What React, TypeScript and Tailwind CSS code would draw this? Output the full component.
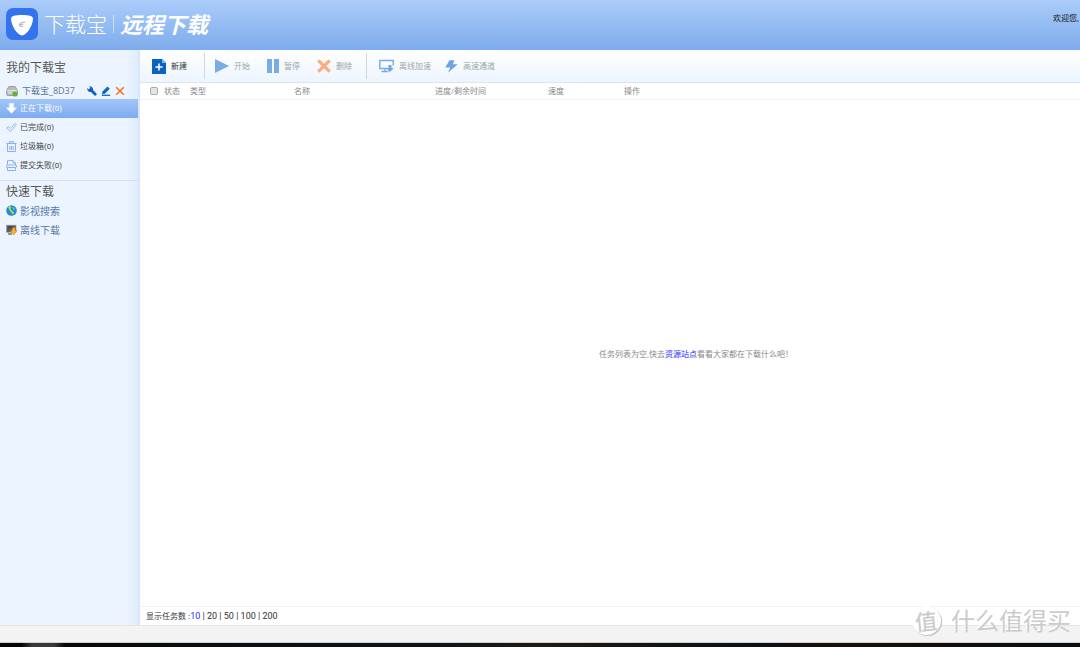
import type { ReactNode } from "react";

const fontStack = "font-['Open_Sans','Noto_Sans_CJK_SC',sans-serif]";

function LogoIcon() {
  return (
    <svg className="size-8 shrink-0" viewBox="0 0 32 32" aria-hidden="true">
      <rect width="32" height="32" rx="7" fill="#3373ed" />
      <path d="M5 10.500C5 8 9 7 16 7s11 1 11 3.500c0 7-6.500 17-11 17S5 17.500 5 10.500Z" fill="#fff" />
      <path d="M19.500 14c-4 0-6 1.300-6 3 0 1.300 2 1.700 3.500 1.200M13.500 16.800l4-.8" fill="none" stroke="#b4b6b8" strokeWidth="1.200" />
    </svg>
  );
}

function DriveIcon() {
  return (
    <svg className="size-3 shrink-0" viewBox="0 0 12 12" aria-hidden="true">
      <path d="M2.800 1.500h6.400L11.300 5.500v4a1 1 0 0 1-1 1H1.700a1 1 0 0 1-1-1v-4Z" fill="#b9bdbd" stroke="#8a9092" strokeWidth=".8" />
      <path d="M1.200 5.800h9.600M2 8h4" stroke="#f4f6f6" strokeWidth=".9" />
      <circle cx="9" cy="9" r="2.600" fill="#65b32c" />
    </svg>
  );
}

function WrenchIcon() {
  return (
    <svg className="size-[10px]" viewBox="0 0 10 10" aria-hidden="true">
      <path d="M3.500 3.500 8.200 8.200" stroke="#0a5fc4" strokeWidth="2.800" strokeLinecap="round" />
      <path d="M.3 2C-.2 4.600 2 6.500 4.200 6L6 4.200C6.500 2 4.600-.2 2 .3L3.600 1.900 3.300 3.300 1.900 3.600Z" fill="#0a5fc4" />
    </svg>
  );
}

function PencilIcon() {
  return (
    <svg className="size-[10px]" viewBox="0 0 10 10" aria-hidden="true">
      <path d="m1.500 5.500 5-5 2.300 2.300-5 5-2.800.5Z" fill="#0a66cc" />
      <path d="M.8 9.300h8.400" stroke="#0a66cc" strokeWidth="1.300" />
    </svg>
  );
}

function CloseIcon() {
  return (
    <svg className="size-[10px]" viewBox="0 0 10 10" aria-hidden="true">
      <path d="m1.200 1.200 7.600 7.600M8.800 1.200 1.200 8.800" stroke="#f5742a" strokeWidth="1.600" />
    </svg>
  );
}

function ArrowDownIcon() {
  return (
    <svg className="size-[11px] shrink-0" viewBox="0 0 11 11" aria-hidden="true">
      <path d="M3.200.3h4.600v4.500h2.900L5.500 10.500.3 4.800h2.900Z" fill="#fff" stroke="#dceafd" strokeWidth=".4" />
    </svg>
  );
}

function CheckIcon() {
  return (
    <svg className="size-[11px] shrink-0" viewBox="0 0 11 11" aria-hidden="true">
      <path d="m.7 6.200 1.500-1.500L4.500 6.500 9.200 1.300l1.200 1.100-5.700 7Z" fill="#f2f7ff" stroke="#86b1ee" strokeWidth=".9" strokeLinejoin="round" />
    </svg>
  );
}

function TrashIcon() {
  return (
    <svg className="size-[11px] shrink-0" viewBox="0 0 11 11" fill="none" stroke="#86b1ee" aria-hidden="true">
      <path d="M.5 2.500h10M3.500 2.300V.7h4v1.600M1.500 2.500v8h8v-8M3.800 5v4M5.500 5v4M7.200 5v4" />
    </svg>
  );
}

function FileIcon() {
  return (
    <svg className="size-[11px] shrink-0" viewBox="0 0 11 11" fill="none" stroke="#86b1ee" aria-hidden="true">
      <path d="M1.500 5V.6h5.700L9.500 3v2M7 .8V3h2.300M1.500 7.500v3h8v-3" />
      <rect x=".6" y="5" width="9.800" height="2.500" rx=".5" />
    </svg>
  );
}

function GlobeIcon() {
  return (
    <svg className="size-[11px] shrink-0" viewBox="0 0 11 11" aria-hidden="true">
      <circle cx="5.500" cy="5.500" r="5.300" fill="#238bd0" />
      <path d="M2 2.500C3.500.8 5 1 5.500 2L4.500 3.500 6 5.500 8 7.500 7.500 9.500C5.500 9 5.500 7 4 6Z" fill="#a7dd5b" />
      <path d="M6.500 1.500 9.500 4l-2 1.200Z" fill="#63c9e5" />
    </svg>
  );
}

function OfflineIcon() {
  return (
    <svg className="size-[11px] shrink-0" viewBox="0 0 11 11" aria-hidden="true">
      <rect x=".5" y="1.200" width="9.500" height="7" fill="#555b62" stroke="#989ea4" strokeWidth=".7" />
      <path d="M2 3h5M2 10h4" stroke="#33373b" strokeWidth="1.200" />
      <path d="M6.300 3.800h2.900v2.700h1.700L7.700 10.800 4.400 6.500h1.900Z" fill="#ffb52d" stroke="#d66c14" strokeWidth=".6" />
    </svg>
  );
}

function NewIcon() {
  return (
    <svg className="h-[15px] w-[14px]" viewBox="0 0 14 15" aria-hidden="true">
      <path d="M0 0h10l4 4v11H0Z" fill="#0c63bf" />
      <path d="M10 0v4h4Z" fill="#79b4ef" />
      <path d="M7 4.500v7M3.500 8h7" stroke="#fff" strokeWidth="1.500" />
    </svg>
  );
}

function PlayIcon() {
  return (
    <svg className="size-[14px]" viewBox="0 0 14 14" aria-hidden="true">
      <path d="M0 0v14l14-7Z" fill="#77ace6" />
    </svg>
  );
}

function PauseIcon() {
  return (
    <svg className="h-[14px] w-3" viewBox="0 0 12 14" aria-hidden="true">
      <path d="M0 0h5v14H0ZM7 0h5v14H7Z" fill="#77ace6" />
    </svg>
  );
}

function DeleteIcon() {
  return (
    <svg className="size-[14px]" viewBox="0 0 14 14" aria-hidden="true">
      <path d="m1.300 1.300 11.400 11.400M12.700 1.300 1.300 12.700" stroke="#fbae7b" strokeWidth="3.300" />
    </svg>
  );
}

function MonitorIcon() {
  return (
    <svg className="h-[14px] w-[15px]" viewBox="0 0 15 14" aria-hidden="true">
      <path d="M8 9.500H.8V1.500h13.400v5M2.500 12.500h7M6 9.500v3" fill="none" stroke="#77ace6" strokeWidth="1.400" />
      <path d="M9.500 6h3v3h2.300L11 13 7.200 9h2.300Z" fill="#6da4e2" />
    </svg>
  );
}

function BoltIcon() {
  return (
    <svg className="size-[13px]" viewBox="0 0 13 13" aria-hidden="true">
      <path d="M4.500.2h5L7.800 4.300h4.900L3 12.800l2.300-5.300H.3Z" fill="#6da4e2" />
    </svg>
  );
}

function ToolButton({ icon, label, active = false }: { icon: ReactNode; label: string; active?: boolean }) {
  return (
    <button type="button" disabled={!active} className={`flex items-center gap-[5px] ${active ? "text-[#333]" : "text-[#a0a4a9]"}`}>
      {icon}
      {label}
    </button>
  );
}

const statusLinks = [
  { label: "正在下载(0)", icon: <ArrowDownIcon />, selected: true },
  { label: "已完成(0)", icon: <CheckIcon />, selected: false },
  { label: "垃圾箱(0)", icon: <TrashIcon />, selected: false },
  { label: "提交失败(0)", icon: <FileIcon />, selected: false },
];

const pageSizes = [10, 20, 50, 100, 200];

function Sidebar() {
  return (
    <aside className="w-[140px] shrink-0 border-r-2 border-[#d6e6fd] bg-[linear-gradient(to_right,#ecf5ff_90%,#e1edfc)] text-[#444]">
      <h2 className="pt-[9px] pl-[6px] text-xs leading-[18px] text-[#555]">我的下载宝</h2>
      <div className="mt-[6px] flex h-4 items-center pl-[6px]">
        <DriveIcon />
        <a href="#device" className="ml-1 text-[9px] text-[#5b7399]">下载宝_8D37</a>
        <div className="ml-3 flex gap-1">
          <button type="button" aria-label="设置"><WrenchIcon /></button>
          <button type="button" aria-label="重命名"><PencilIcon /></button>
          <button type="button" aria-label="移除"><CloseIcon /></button>
        </div>
      </div>
      <nav className="border-b border-[#cfe1fc] pb-[5px]">
        {statusLinks.map((item) => (
          <a
            key={item.label}
            href="#tasks"
            className={`flex h-[19px] items-center gap-[3px] pl-[6px] font-['Roboto','Noto_Sans_CJK_SC',sans-serif] ${item.selected ? "bg-linear-to-b from-[#a3c6f8] to-[#7dabf0] text-white" : ""}`}
          >
            {item.icon}
            {item.label}
          </a>
        ))}
      </nav>
      <h2 className="mt-[2px] pl-[6px] text-xs leading-[18px] text-[#555]">快速下载</h2>
      <nav className="text-[10px] text-[#5877a8]">
        <a href="#search" className="flex h-[19px] items-center gap-[3px] pl-[6px]"><GlobeIcon />影视搜索</a>
        <a href="#offline" className="flex h-[19px] items-center gap-[3px] pl-[6px]"><OfflineIcon />离线下载</a>
      </nav>
    </aside>
  );
}

function TaskPanel() {
  return (
    <main className="flex min-w-0 grow flex-col bg-white">
      <div className="flex h-[33px] shrink-0 items-center border-b border-[#d5e6fa] bg-linear-to-b from-white to-[#edf5ff] pl-3">
        <ToolButton icon={<NewIcon />} label="新建" active />
        <span className="ml-[17px] h-[26px] w-px bg-[#d4d7da]" />
        <div className="ml-[10px] flex gap-[17px]">
          <ToolButton icon={<PlayIcon />} label="开始" />
          <ToolButton icon={<PauseIcon />} label="暂停" />
          <ToolButton icon={<DeleteIcon />} label="删除" />
        </div>
        <span className="ml-[14px] h-[26px] w-px bg-[#d4d7da]" />
        <div className="ml-3 flex gap-[14px]">
          <ToolButton icon={<MonitorIcon />} label="离线加速" />
          <ToolButton icon={<BoltIcon />} label="高速通道" />
        </div>
      </div>
      <table className="w-full table-fixed text-left text-[#888]">
        <thead>
          <tr className="h-4 border-b border-[#eef4fb]">
            <th className="w-6 pl-[10px]">
              <input type="checkbox" aria-label="全选" className="block size-2 appearance-none rounded-xs border border-[#a9a9a9] bg-[#e4e4e4]" />
            </th>
            <th className="w-[26px] font-normal">状态</th>
            <th className="w-[104px] font-normal">类型</th>
            <th className="w-[141px] font-normal">名称</th>
            <th className="w-[113px] font-normal">进度/剩余时间</th>
            <th className="w-[76px] font-normal">速度</th>
            <th className="font-normal">操作</th>
          </tr>
        </thead>
      </table>
      <div className="flex grow items-center justify-center pt-[3px] pl-[172px] text-[#888]">
        <p>
          任务列表为空,快去<a href="#sites" className="text-[#2a2aff]">资源站点</a>看看大家都在下载什么吧！
        </p>
      </div>
      <div className="flex h-[19px] shrink-0 items-center border-t border-[#eef2fa] pl-[6px] whitespace-pre text-[#333]">
        <span>显示任务数 :</span>
        <span className="font-['Roboto',sans-serif] text-[9px]">
          {pageSizes.map((size, i) => (
            <span key={size}>
              {i > 0 && " | "}
              <a href="#size" className={i === 0 ? "text-[#2a2aff]" : ""}>{size}</a>
            </span>
          ))}
        </span>
      </div>
    </main>
  );
}

export default function App() {
  return (
    <div className={`relative flex h-screen flex-col overflow-hidden bg-white text-[8px] leading-3 ${fontStack}`}>
      <header className="flex h-[50px] shrink-0 items-center border-b-2 border-[#7cabf2] bg-linear-to-b from-[#aaccfa] to-[#80adec] pl-[6px]">
        <LogoIcon />
        <h1 className="ml-[6px] flex items-center text-white">
          <span className="text-[21px] leading-6 font-light">下载宝</span>
          <span className="mx-[6px] h-[18px] w-px bg-white/50" />
          <span className="text-[22px] leading-6 font-bold italic">远程下载</span>
        </h1>
        <p className="mb-3 ml-auto pr-px whitespace-nowrap text-[#111]">欢迎您,</p>
      </header>
      <div className="flex min-h-0 grow">
        <Sidebar />
        <TaskPanel />
      </div>
      <footer className="shrink-0">
        <div className="h-[18px] border-y border-t-[#e4e4e4] border-b-[#d0d0d0] bg-[#f3f3f3]" />
        <div className="h-1 bg-[linear-gradient(to_right,#050505_2%,#3a3a3a_3%,#3a3a3a_5%,#080808_6%,#101316_40%,#1c1917_50%,#0c1012_70%,#180d0d_78%,#0a0d0e)]" />
      </footer>
      <div className="pointer-events-none absolute right-[9px] bottom-3 flex items-center gap-[10px] text-[#cbcbcb]">
        <span className="flex size-[29px] items-center justify-center rounded-full bg-white text-[22px] leading-none font-medium shadow-[1px_1px_1px_#bbb]">
          <span className="-rotate-6">值</span>
        </span>
        <span className="text-2xl leading-none [text-shadow:-1px_-1px_0_#fff]">什么值得买</span>
      </div>
    </div>
  );
}
